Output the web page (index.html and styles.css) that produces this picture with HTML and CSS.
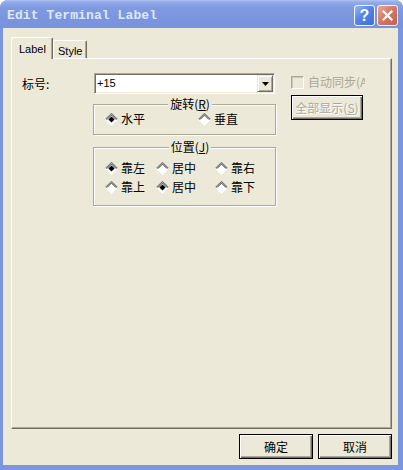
FILE: index.html
```html
<!DOCTYPE html>
<html>
<head>
<meta charset="utf-8">
<link rel="stylesheet" href="styles.css">
</head>
<body>
<div class="window">
  <div class="titlebar">
    <span class="title">Edit Terminal Label</span>
    <div class="caption-btns">
      <span class="cbtn help">?</span>
      <span class="cbtn close"><svg width="11" height="11" viewBox="0 0 11 11"><path d="M1.5 1.5 L9.5 9.5 M9.5 1.5 L1.5 9.5" stroke="#fff" stroke-width="2.2" stroke-linecap="square"/></svg></span>
    </div>
  </div>
  <div class="client">
    <div class="tabs">
      <div class="tab active">Label</div>
      <div class="tab inactive">Style</div>
    </div>
    <div class="panel">
      <div class="form">
        <div class="lbl">标号:</div>
        <div class="combo">
          <span class="combo-val">+15</span>
          <span class="combo-btn"><svg width="7" height="4" viewBox="0 0 7 4"><polygon points="0,0 7,0 3.5,4" fill="#000"/></svg></span>
        </div>
        <div class="check">
          <span class="box"></span>
          <span class="check-text">自动同步(A)</span>
        </div>

        <div class="group rot">
          <div class="group-title">旋转(<u>R</u>)</div>
          <div class="rot-row">
            <div class="opt w93">
              <svg class="radio" width="13" height="13" viewBox="0 0 13 13"><polygon points="6.5,0.5 12.5,6.5 6.5,12.5 0.5,6.5" fill="#fff"/><polyline points="0.6,6.5 6.5,0.6 12.4,6.5" fill="none" stroke="#808080" stroke-width="1.2"/><polyline points="2.1,6.5 6.5,2.1 10.9,6.5" fill="none" stroke="#404040" stroke-width="1"/><polyline points="0.5,6.5 6.5,12.5 12.5,6.5" fill="none" stroke="#fff"/><polygon points="6.5,3.4 9.6,6.5 6.5,9.6 3.4,6.5" fill="#000"/></svg>
              <span>水平</span>
            </div>
            <div class="opt">
              <svg class="radio" width="13" height="13" viewBox="0 0 13 13"><polygon points="6.5,0.5 12.5,6.5 6.5,12.5 0.5,6.5" fill="#fff"/><polyline points="0.6,6.5 6.5,0.6 12.4,6.5" fill="none" stroke="#808080" stroke-width="1.2"/><polyline points="2.1,6.5 6.5,2.1 10.9,6.5" fill="none" stroke="#404040" stroke-width="1"/><polyline points="0.5,6.5 6.5,12.5 12.5,6.5" fill="none" stroke="#fff"/></svg>
              <span>垂直</span>
            </div>
          </div>
        </div>
        <div class="btn btn-all disabled">全部显示(<u>S</u>)</div>

        <div class="group pos">
          <div class="group-title">位置(<u>J</u>)</div>
          <div class="pos-grid">
            <div class="opt">
              <svg class="radio" width="13" height="13" viewBox="0 0 13 13"><polygon points="6.5,0.5 12.5,6.5 6.5,12.5 0.5,6.5" fill="#fff"/><polyline points="0.6,6.5 6.5,0.6 12.4,6.5" fill="none" stroke="#808080" stroke-width="1.2"/><polyline points="2.1,6.5 6.5,2.1 10.9,6.5" fill="none" stroke="#404040" stroke-width="1"/><polyline points="0.5,6.5 6.5,12.5 12.5,6.5" fill="none" stroke="#fff"/><polygon points="6.5,3.4 9.6,6.5 6.5,9.6 3.4,6.5" fill="#000"/></svg>
              <span>靠左</span>
            </div>
            <div class="opt">
              <svg class="radio" width="13" height="13" viewBox="0 0 13 13"><polygon points="6.5,0.5 12.5,6.5 6.5,12.5 0.5,6.5" fill="#fff"/><polyline points="0.6,6.5 6.5,0.6 12.4,6.5" fill="none" stroke="#808080" stroke-width="1.2"/><polyline points="2.1,6.5 6.5,2.1 10.9,6.5" fill="none" stroke="#404040" stroke-width="1"/><polyline points="0.5,6.5 6.5,12.5 12.5,6.5" fill="none" stroke="#fff"/></svg>
              <span>居中</span>
            </div>
            <div class="opt">
              <svg class="radio" width="13" height="13" viewBox="0 0 13 13"><polygon points="6.5,0.5 12.5,6.5 6.5,12.5 0.5,6.5" fill="#fff"/><polyline points="0.6,6.5 6.5,0.6 12.4,6.5" fill="none" stroke="#808080" stroke-width="1.2"/><polyline points="2.1,6.5 6.5,2.1 10.9,6.5" fill="none" stroke="#404040" stroke-width="1"/><polyline points="0.5,6.5 6.5,12.5 12.5,6.5" fill="none" stroke="#fff"/></svg>
              <span>靠右</span>
            </div>
            <div class="opt">
              <svg class="radio" width="13" height="13" viewBox="0 0 13 13"><polygon points="6.5,0.5 12.5,6.5 6.5,12.5 0.5,6.5" fill="#fff"/><polyline points="0.6,6.5 6.5,0.6 12.4,6.5" fill="none" stroke="#808080" stroke-width="1.2"/><polyline points="2.1,6.5 6.5,2.1 10.9,6.5" fill="none" stroke="#404040" stroke-width="1"/><polyline points="0.5,6.5 6.5,12.5 12.5,6.5" fill="none" stroke="#fff"/></svg>
              <span>靠上</span>
            </div>
            <div class="opt">
              <svg class="radio" width="13" height="13" viewBox="0 0 13 13"><polygon points="6.5,0.5 12.5,6.5 6.5,12.5 0.5,6.5" fill="#fff"/><polyline points="0.6,6.5 6.5,0.6 12.4,6.5" fill="none" stroke="#808080" stroke-width="1.2"/><polyline points="2.1,6.5 6.5,2.1 10.9,6.5" fill="none" stroke="#404040" stroke-width="1"/><polyline points="0.5,6.5 6.5,12.5 12.5,6.5" fill="none" stroke="#fff"/><polygon points="6.5,3.4 9.6,6.5 6.5,9.6 3.4,6.5" fill="#000"/></svg>
              <span>居中</span>
            </div>
            <div class="opt">
              <svg class="radio" width="13" height="13" viewBox="0 0 13 13"><polygon points="6.5,0.5 12.5,6.5 6.5,12.5 0.5,6.5" fill="#fff"/><polyline points="0.6,6.5 6.5,0.6 12.4,6.5" fill="none" stroke="#808080" stroke-width="1.2"/><polyline points="2.1,6.5 6.5,2.1 10.9,6.5" fill="none" stroke="#404040" stroke-width="1"/><polyline points="0.5,6.5 6.5,12.5 12.5,6.5" fill="none" stroke="#fff"/></svg>
              <span>靠下</span>
            </div>
          </div>
        </div>
      </div>
    </div>
    <div class="footer">
      <div class="btn">确定</div>
      <div class="btn">取消</div>
    </div>
  </div>
</div>
</body>
</html>
```

FILE: styles.css
```css
html, body {
  margin: 0;
  padding: 0;
  background: #fff;
}
body {
  font-family: "Liberation Sans", "Noto Sans CJK SC", sans-serif;
  font-size: 11px;
  color: #000;
}
.window {
  width: 403px;
  height: 470px;
  display: flex;
  flex-direction: column;
  background: #7b96df;
  border-radius: 8px 8px 0 0;
  overflow: hidden;
}
.titlebar {
  height: 28px;
  flex: none;
  display: flex;
  align-items: center;
  padding: 0 5px 0 7px;
  background: linear-gradient(to bottom, #b2c4f2 0px, #92abea 2px, #7f9ae1 8px, #7a95de 20px, #7893dd 28px);
}
.title {
  flex: 1;
  font-family: "Liberation Mono", monospace;
  font-weight: bold;
  font-size: 13px;
  color: #dfe7fc;
  padding-top: 3px;
  letter-spacing: 0.1px;
}
.caption-btns {
  display: flex;
  gap: 2px;
  margin-top: 3px;
}
.cbtn {
  width: 21px;
  height: 21px;
  box-sizing: border-box;
  border: 1px solid #f4f6fd;
  border-radius: 3px;
  display: flex;
  align-items: center;
  justify-content: center;
  color: #fff;
  font-family: "Liberation Sans", sans-serif;
  font-weight: bold;
  font-size: 16px;
  line-height: 1;
}
.help {
  background: linear-gradient(135deg, #9ab7f5 0%, #5583e8 45%, #3f6ddc 100%);
}
.close {
  background: linear-gradient(135deg, #eaa899 0%, #d27b69 45%, #c2604d 100%);
}
.client {
  flex: 1;
  margin: 0 5px 5px 3px;
  background: #ece9d8;
  padding: 9px 6px 0 8px;
  display: flex;
  flex-direction: column;
}
.tabs {
  display: flex;
  align-items: flex-end;
  height: 21px;
  flex: none;
  position: relative;
  z-index: 1;
}
.tab {
  box-sizing: border-box;
  font-size: 11px;
  line-height: 14px;
  border-top: 1px solid #fff;
  border-left: 1px solid #fff;
  border-right: 1px solid #716f64;
  box-shadow: inset -1px 0 #aca899;
  border-radius: 2px 2px 0 0;
  background: #ece9d8;
  white-space: nowrap;
}
.tab.active {
  width: 42px;
  height: 22px;
  margin-bottom: -1px;
  padding: 4px 0 0 7px;
}
.tab.inactive {
  width: 34px;
  height: 18px;
  padding: 3px 0 0 4px;
}
.panel {
  height: 371px;
  flex: none;
  box-sizing: border-box;
  border: 1px solid;
  border-color: #fff #716f64 #716f64 #fff;
  box-shadow: inset -1px -1px #aca899;
  padding: 14px 0 0 10px;
}
.form {
  display: grid;
  grid-template-columns: 56px 183px auto;
  column-gap: 15px;
  align-items: start;
}
.lbl {
  font-family: "Noto Sans CJK SC", sans-serif;
  font-size: 12px;
  line-height: 21px;
  white-space: nowrap;
}
.combo {
  margin-left: 1px;
  width: 181px;
  height: 21px;
  box-sizing: border-box;
  border: 1px solid;
  border-color: #aca899 #fff #fff #aca899;
  box-shadow: inset 1px 1px #716f64, inset -1px -1px #ece9d8;
  background: #fff;
  display: flex;
}
.combo-val {
  flex: 1;
  padding-left: 2px;
  line-height: 19px;
  font-size: 11px;
}
.combo-btn {
  width: 16px;
  height: 17px;
  margin: 1px 1px 1px 0;
  box-sizing: border-box;
  border: 1px solid;
  border-color: #ece9d8 #716f64 #716f64 #ece9d8;
  box-shadow: inset 1px 1px #fff, inset -1px -1px #aca899;
  background: #ece9d8;
  display: flex;
  align-items: center;
  justify-content: center;
}
.check {
  display: flex;
  align-items: center;
  gap: 4px;
  margin-top: 2px;
  color: #aca899;
  font-family: "Noto Sans CJK SC", sans-serif;
  font-size: 12px;
  line-height: 14px;
}
.box {
  width: 13px;
  height: 13px;
  box-sizing: border-box;
  border: 1px solid;
  border-color: #aca899 #fff #fff #aca899;
  box-shadow: inset 1px 1px #cbc8b8, inset -1px -1px #ece9d8;
  background: #ece9d8;
  flex: none;
}
.check-text {
  width: 57px;
  overflow: hidden;
  white-space: nowrap;
}
.group {
  border: 1px solid #aca899;
  box-shadow: inset 1px 1px #fff, 1px 1px #fff;
  font-family: "Noto Sans CJK SC", sans-serif;
  font-size: 12px;
  box-sizing: border-box;
  padding-left: 11px;
}
.group-title {
  width: max-content;
  margin: -8px auto 0;
  padding: 0 2px;
  background: #ece9d8;
  line-height: 14px;
}
.group-title u, .btn u {
  text-underline-offset: 1px;
}
.rot {
  grid-column: 2;
  margin-top: 10px;
  height: 31px;
}
.rot-row {
  display: flex;
  margin-top: 1px;
}
.opt {
  display: flex;
  align-items: center;
  gap: 3px;
  line-height: 14px;
  height: 14px;
}
.w93 {
  width: 93px;
}
.radio {
  flex: none;
  display: block;
}
.pos {
  grid-column: 2;
  margin-top: 12px;
  height: 59px;
}
.pos-grid {
  display: grid;
  grid-template-columns: 51px 59px auto;
  row-gap: 5px;
  margin-top: 7px;
}
.btn {
  width: 74px;
  height: 25px;
  box-sizing: border-box;
  border: 1px solid #000;
  box-shadow: inset 1px 1px #fff, inset -1px -1px #716f64, inset -2px -2px #aca899;
  background: #ece9d8;
  display: flex;
  align-items: center;
  justify-content: center;
  font-family: "Noto Sans CJK SC", sans-serif;
  font-size: 12px;
  line-height: 14px;
}
.btn-all {
  width: 72px;
  margin-top: 1px;
}
.btn.disabled {
  color: #aca899;
  text-shadow: 1px 1px 0 #fff;
}
.footer {
  display: flex;
  justify-content: flex-end;
  gap: 5px;
  margin-top: 5px;
}
```
